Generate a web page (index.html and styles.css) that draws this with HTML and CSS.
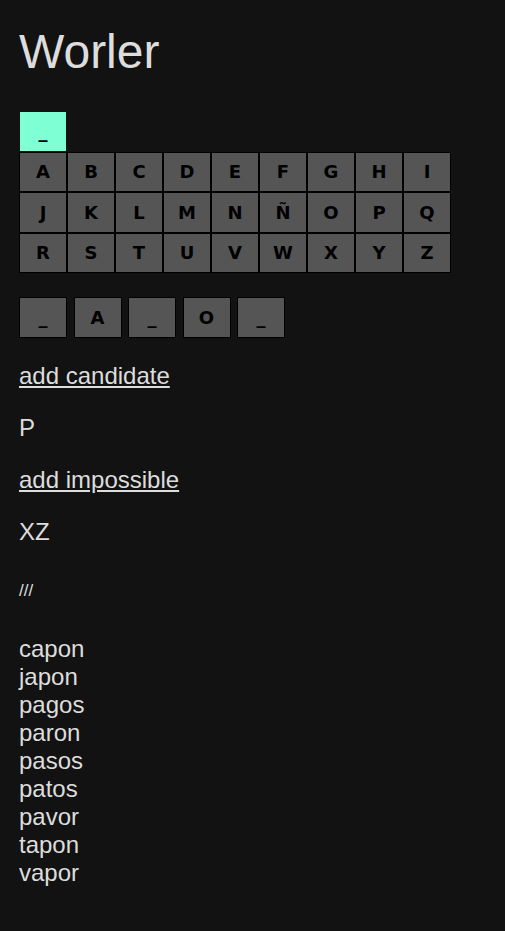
FILE: index.html
```html
<!DOCTYPE html>
<html lang="es">
<head>
<meta charset="utf-8">
<title>Worler</title>
<link rel="stylesheet" href="styles.css">
</head>
<body>
<main class="app">
  <h1 class="title">Worler</h1>

  <section class="keyboard">
    <div class="key-row-top">
      <button class="key key-active">_</button>
    </div>
    <div class="key-grid">
      <button class="key">A</button><button class="key">B</button><button class="key">C</button><button class="key">D</button><button class="key">E</button><button class="key">F</button><button class="key">G</button><button class="key">H</button><button class="key">I</button>
      <button class="key">J</button><button class="key">K</button><button class="key">L</button><button class="key">M</button><button class="key">N</button><button class="key">Ñ</button><button class="key">O</button><button class="key">P</button><button class="key">Q</button>
      <button class="key">R</button><button class="key">S</button><button class="key">T</button><button class="key">U</button><button class="key">V</button><button class="key">W</button><button class="key">X</button><button class="key">Y</button><button class="key">Z</button>
    </div>
  </section>

  <div class="slots">
    <button class="key slot">_</button>
    <button class="key slot">A</button>
    <button class="key slot">_</button>
    <button class="key slot">O</button>
    <button class="key slot">_</button>
  </div>

  <p class="line"><a class="action" href="#">add candidate</a></p>
  <p class="line">P</p>
  <p class="line"><a class="action" href="#">add impossible</a></p>
  <p class="line">XZ</p>

  <div class="separator">///</div>

  <ul class="words">
    <li>capon</li>
    <li>japon</li>
    <li>pagos</li>
    <li>paron</li>
    <li>pasos</li>
    <li>patos</li>
    <li>pavor</li>
    <li>tapon</li>
    <li>vapor</li>
  </ul>
</main>
</body>
</html>
```
FILE: styles.css
```css
html, body {
  margin: 0;
  padding: 0;
  background: #121212;
}

body {
  color: #dddddd;
  font-family: "Liberation Sans", Arial, sans-serif;
}

.app {
  padding: 0 19px 40px;
}

.title {
  font-size: 48px;
  font-weight: normal;
  line-height: normal;
  margin: 24px 0 32px;
}

.keyboard {
  display: flex;
  flex-direction: column;
}

.key-row-top {
  display: flex;
}

.key-grid {
  display: grid;
  grid-template-columns: repeat(9, 48px);
  grid-auto-rows: 40.5px;
}

.key {
  box-sizing: border-box;
  width: 48px;
  height: 40.5px;
  margin: 0;
  padding: 0;
  border: 1px solid #000;
  background: #555555;
  color: #000;
  font-family: "DejaVu Sans", Verdana, sans-serif;
  font-weight: bold;
  font-size: 18px;
  display: flex;
  align-items: center;
  justify-content: center;
}

.key-active {
  background: #7fffd4;
  border-color: #121212;
}

.slots {
  display: flex;
  gap: 6.5px;
  margin: 24px 0 24px;
}

.slot {
  height: 40.5px;
}

.line {
  font-size: 24px;
  margin: 24px 0;
}

.action {
  color: #dddddd;
  text-decoration: underline;
}

.separator {
  font-size: 17px;
  margin: 35px 0 34px;
}

.words {
  list-style: none;
  margin: 0;
  padding: 0;
  font-size: 24px;
  line-height: normal;
}
```
